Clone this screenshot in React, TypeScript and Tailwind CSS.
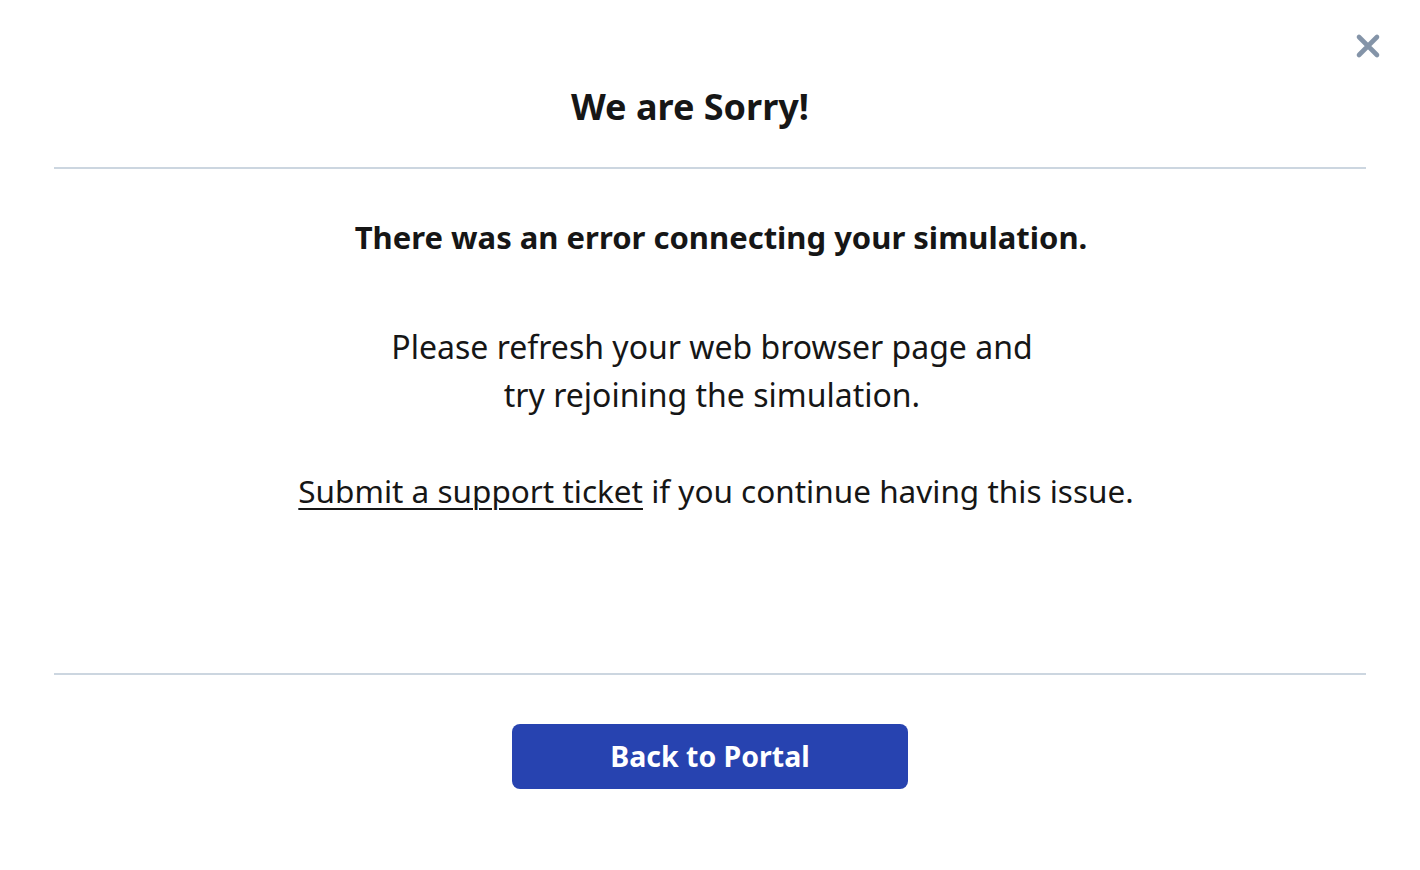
export default function App() {
  return (
    <div
      className="relative min-h-screen w-full bg-white text-[#161616]"
      style={{ fontFamily: "'Noto Sans', 'Open Sans', sans-serif" }}
    >
      {/* Close */}
      <button className="absolute left-[1355px] top-[33px] text-[#8494a8]">
        <svg width="26" height="26" viewBox="0 0 26 26" fill="none">
          <path
            d="M4 4L22 22M22 4L4 22"
            stroke="currentColor"
            strokeWidth="4.6"
            strokeLinecap="round"
          />
        </svg>
      </button>

      <div className="flex flex-col px-[54px] pt-[84px]">
        {/* Title */}
        <h1 className="pr-[40px] text-center text-[36px] font-bold leading-[46px]">
          We are Sorry!
        </h1>

        <div className="mt-[37px] h-[2px] w-full bg-[#ccd6e0]" />

        {/* Body */}
        <div className="flex h-[504px] flex-col items-center pt-[46px] text-center">
          <p className="pl-[22px] text-[31px] font-bold leading-[44px]">
            There was an error connecting your simulation.
          </p>
          <p className="mt-[64px] pl-[4px] text-[32px] leading-[48px]">
            Please refresh your web browser page and
            <br />
            try rejoining the simulation.
          </p>
          <p className="mt-[48px] pl-[12px] text-[31.5px] leading-[48px]">
            <a href="#" className="underline decoration-[1.5px] underline-offset-[5px]">
              Submit a support ticket
            </a>{" "}
            if you continue having this issue.
          </p>
        </div>

        <div className="h-[2px] w-full bg-[#ccd6e0]" />

        {/* Footer */}
        <div className="flex justify-center pt-[49px]">
          <button className="h-[65px] w-[396px] rounded-[8px] bg-[#2743b0] text-[28.5px] font-bold text-white">
            Back to Portal
          </button>
        </div>
      </div>
    </div>
  );
}
